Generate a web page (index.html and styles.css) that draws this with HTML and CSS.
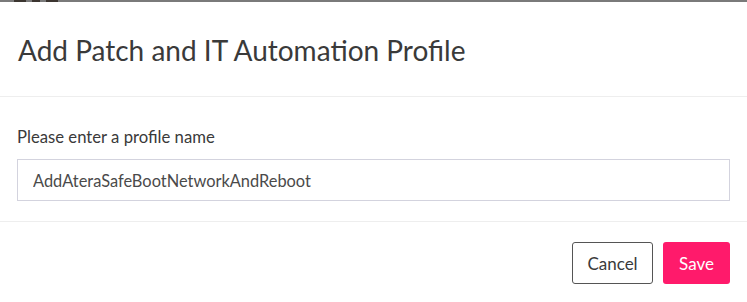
FILE: index.html
```html
<!DOCTYPE html>
<html lang="en">
<head>
    <meta charset="UTF-8" />
    <meta name="viewport" content="width=device-width, initial-scale=1" />
    <link rel="stylesheet" href="styles.css">
</head>
<body>
    <div class="backdrop-edge">
        <span class="ghost"></span><span class="ghost short"></span><span class="ghost"></span>
    </div>
    <div class="modal">
        <div class="modal-header">
            <h1 class="modal-title">Add Patch and IT Automation Profile</h1>
        </div>
        <div class="modal-body">
            <label class="field-label" for="profile-name">Please enter a profile name</label>
            <input id="profile-name" class="field-input" type="text" value="AddAteraSafeBootNetworkAndReboot" />
        </div>
        <div class="modal-footer">
            <button class="btn btn-cancel">Cancel</button>
            <button class="btn btn-save">Save</button>
        </div>
    </div>
</body>
</html>
```

FILE: styles.css
```css
* {
    box-sizing: border-box;
    margin: 0;
    padding: 0;
}

body {
    font-family: Lato, 'Noto Sans', sans-serif;
    background: #fff;
    color: #333;
    width: 747px;
    height: 302px;
    overflow: hidden;
}

.backdrop-edge {
    height: 2px;
    background: #7a7a7a;
    display: flex;
    gap: 6px;
    padding-left: 14px;
}

.ghost {
    width: 12px;
    height: 2px;
    background: #3b3530;
}

.ghost.short {
    width: 8px;
}

.modal {
    background: #fff;
}

.modal-header {
    height: 95px;
    padding: 30px 18px 0;
    border-bottom: 1px solid #eeeeee;
}

.modal-title {
    font-size: 28px;
    font-weight: 400;
    color: #3a3a3a;
    line-height: 36px;
}

.modal-body {
    height: 125px;
    padding: 29px 17px 0;
    border-bottom: 1px solid #eeeeee;
}

.field-label {
    display: block;
    font-size: 16.7px;
    color: #3a3a3a;
    line-height: 22px;
    margin-bottom: 11px;
}

.field-input {
    display: block;
    width: 713px;
    height: 42px;
    padding: 0 15px;
    font-family: inherit;
    font-size: 16.4px;
    color: #4a4a4a;
    border: 1px solid #d3d3de;
    border-radius: 0;
    outline: none;
}

.modal-footer {
    display: flex;
    justify-content: flex-end;
    gap: 10px;
    padding: 20px 17px 0;
}

.btn {
    height: 42px;
    font-family: inherit;
    font-size: 17px;
    border-radius: 3px;
    cursor: pointer;
}

.btn-cancel {
    width: 81px;
    background: #fff;
    color: #3a3a3a;
    border: 1px solid #555;
}

.btn-save {
    width: 67px;
    background: #ff1a6b;
    color: #fff;
    border: none;
}
```
